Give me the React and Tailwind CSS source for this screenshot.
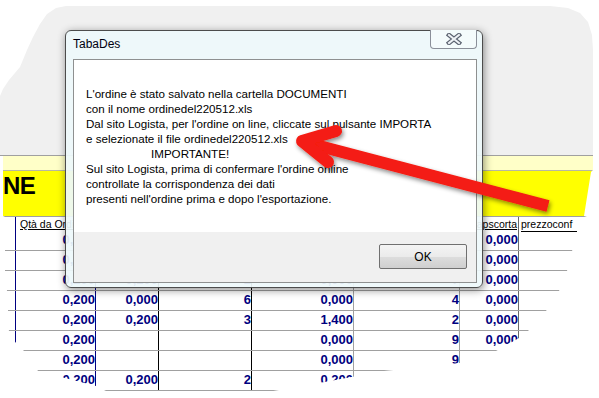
import React from "react";

const rows = [
  ["0,200", "0,200", "1", "0,000", "3", "0,000"],
  ["0,200", "0,000", "4", "0,000", "5", "0,000"],
  ["0,200", "0,200", "2", "0,000", "7", "0,000"],
  ["0,200", "0,000", "6", "0,000", "4", "0,000"],
  ["0,200", "0,200", "3", "1,400", "2", "0,000"],
  ["0,200", "", "", "0,000", "9", "0,000"],
  ["0,200", "", "", "0,000", "9", ""],
  ["0,200", "0,200", "2", "0,200", "", ""],
];

const colBorders = [
  "border-r border-[#000080]",
  "border-r border-[#000080]",
  "border-r border-black",
  "border-r border-black",
  "border-r border-[#a0a0a0]",
  "border-r border-[#a0a0a0]",
  "border-r border-[#6a6a6a]",
  "",
];

const gridCols = "grid grid-cols-[16px_80px_63px_93px_102px_106px_59px_1fr]";

export default function App() {
  return (
    <div className="relative w-[599px] h-[398px] bg-white overflow-hidden font-['Liberation_Sans',Arial,sans-serif]">
      {/* torn screenshot of the application window */}
      <div className="w-[599px] h-[398px] flex flex-col [clip-path:polygon(0px_96px,3px_89px,9px_80px,20px_67px,27px_50px,33px_37px,40px_24px,47px_14px,56px_8px,66px_6px,550px_6px,568px_8px,580px_13px,588px_22px,592px_35px,593px_50px,593px_170px,591px_172px,584px_216px,587px_217px,586px_231px,580px_232px,572px_251px,567px_271px,559px_291px,546px_311px,528px_331px,519px_338px,496px_351px,460px_363px,384px_371px,330px_381px,262px_393px,110px_393px,96px_386px,38px_371px,24px_351px,16px_343px,9px_333px,8px_311px,7px_291px,5px_271px,5px_217px,3px_216px,3px_156px,0px_156px)]">
        <div className="h-[155px] bg-[#f0f0f0]" />
        <div className="h-px bg-[#a0a0a0]" />
        <div className="h-[14px] bg-[#ffffc8]" />
        <div className="h-px bg-[#b8b8a0]" />
        <div className="h-[45px] bg-[#ffff00] pl-[3px] pt-[3px]">
          <span className="text-[24px] leading-none font-bold text-black tracking-[-0.5px]">NE</span>
        </div>
        {/* header row */}
        <div className={gridCols + " h-[15px] border-t border-[#a0a0a0] text-[10.5px] leading-[14px] text-black"}>
          <div className={colBorders[0]} />
          <div className={colBorders[1] + " pl-[4px] overflow-hidden whitespace-nowrap"}>
            <span className="underline">Qtà da Ordinare</span>
          </div>
          <div className={colBorders[2] + " overflow-hidden whitespace-nowrap"}>
            <span className="underline">Qtà conf</span>
          </div>
          <div className={colBorders[3] + " overflow-hidden whitespace-nowrap"}>
            <span className="underline">pezzi</span>
          </div>
          <div className={colBorders[4] + " overflow-hidden whitespace-nowrap"}>
            <span className="underline">qtaord</span>
          </div>
          <div className={colBorders[5] + " overflow-hidden whitespace-nowrap"}>
            <span className="underline">stecche</span>
          </div>
          <div className={colBorders[6] + " flex justify-end overflow-hidden whitespace-nowrap pr-px"}>
            <span className="underline">qtapscorta</span>
          </div>
          <div className="pl-[2px] whitespace-nowrap">
            <span className="inline-block border-b border-black leading-[13px] pr-[5px]">prezzoconf</span>
          </div>
        </div>
        {/* data rows */}
        {rows.map((r, ri) => (
          <div key={ri} className={gridCols + " h-[20px] border-b border-[#a0a0a0] text-[13px] leading-[15px] font-bold text-[#000080]"}>
            <div className={colBorders[0]} />
            {r.map((v, ci) => (
              <div key={ci} className={colBorders[ci + 1] + " flex justify-end items-start pt-px whitespace-nowrap"}>
                {v}
              </div>
            ))}
            <div />
          </div>
        ))}
      </div>

      {/* dialog */}
      <div className="absolute left-[65px] top-[30px] w-[418px] h-[258px] rounded-[6px] border border-[#4c4c4c] bg-[#eef9fbee] shadow-[1px_2px_8px_rgba(0,0,0,0.45)] flex flex-col pl-[7px] pr-[5px] pb-[4px]">
        <div className="h-[28px] flex items-start justify-between">
          <div className="pt-[6px] text-[12px] leading-[15px] text-[#000010]">TabaDes</div>
          <div className="w-[47px] h-[19px] -mt-px rounded-b-[4px] border border-t-0 border-[#8a8f99] bg-[#f4fbfc] flex items-center justify-center">
            <svg width="16" height="12" viewBox="0 0 16 12">
              <path d="M3 2 L13 10 M13 2 L3 10" stroke="#5b6270" strokeWidth="4.4" strokeLinecap="square" />
              <path d="M3 2 L13 10 M13 2 L3 10" stroke="#eef2f6" strokeWidth="2" strokeLinecap="square" />
            </svg>
          </div>
        </div>
        <div className="flex-1 border border-[#8e9090] flex flex-col">
          <div className="h-[172px] bg-white pl-[12px] pt-[26px] text-[11.6px] leading-[15px] text-black whitespace-nowrap">
            <div>L'ordine è stato salvato nella cartella DOCUMENTI</div>
            <div>con il nome ordinedel220512.xls</div>
            <div>Dal sito Logista, per l'ordine on line, cliccate sul pulsante IMPORTA</div>
            <div>e selezionate il file ordinedel220512.xls</div>
            <div className="pl-[65px]">IMPORTANTE!</div>
            <div>Sul sito Logista, prima di confermare l'ordine online</div>
            <div>controllate la corrispondenza dei dati</div>
            <div>presenti nell'ordine prima e dopo l'esportazione.</div>
          </div>
          <div className="flex-1 bg-[#f0f0f0] flex justify-end items-start pt-[12px] pr-[9px]">
            <div className="w-[88px] h-[25px] border border-[#707070] rounded-[2px] bg-[linear-gradient(#f4f4f4,#ebebeb_50%,#dddddd_51%,#cfcfcf)] flex items-center justify-center text-[12px] text-black">
              OK
            </div>
          </div>
        </div>
      </div>

      {/* red arrow annotation */}
      <svg className="absolute left-0 top-0 pointer-events-none" width="599" height="398" viewBox="0 0 599 398">
        <defs>
          <filter id="sh" x="-20%" y="-40%" width="140%" height="180%">
            <feDropShadow dx="1.5" dy="2.5" stdDeviation="2" floodColor="#000" floodOpacity="0.45" />
          </filter>
        </defs>
        <g filter="url(#sh)" stroke="#f41c12" strokeWidth="12" fill="none">
          <line x1="304" y1="142" x2="548" y2="206" strokeLinecap="butt" />
          <polyline points="336,131 302,141 328,162" strokeLinejoin="round" strokeLinecap="round" />
        </g>
      </svg>
    </div>
  );
}
